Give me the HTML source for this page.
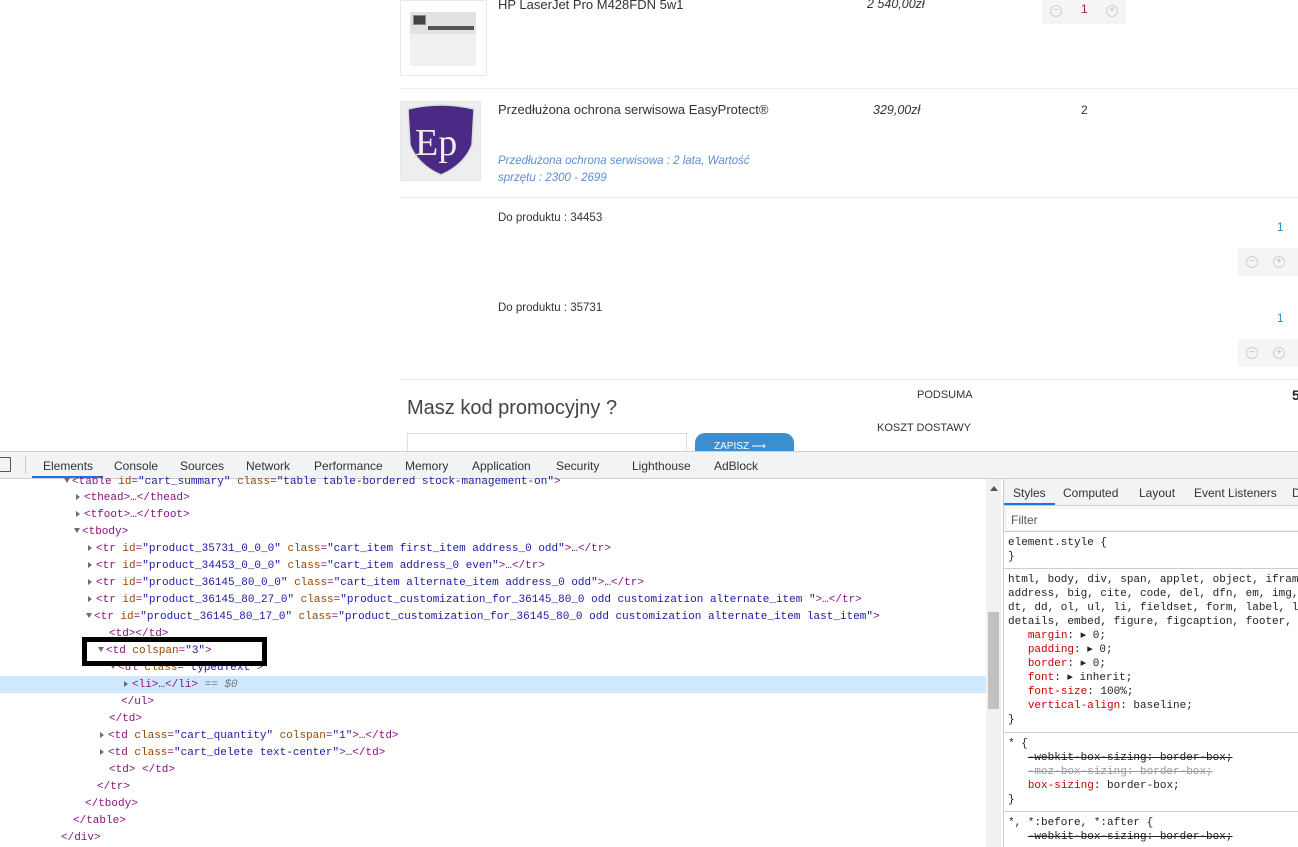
<!DOCTYPE html>
<html><head><meta charset="utf-8"><style>
*{box-sizing:border-box;margin:0;padding:0}
body{width:1298px;height:847px;overflow:hidden;background:#fff;position:relative;font-family:"Liberation Sans",sans-serif}
.a{position:absolute;white-space:nowrap}
.hr{position:absolute;height:1px;background:#ececec}
.qb{position:absolute;background:#f5f5f5}
.ci{position:absolute;width:12px;height:12px;border:1px solid #cfcfcf;border-radius:50%;color:#bbb;font-size:10px;line-height:10px;text-align:center}
.ln{position:absolute;height:17px;line-height:17px;white-space:nowrap;font-family:"Liberation Mono",monospace;font-size:11px;color:#881280}
.t{color:#881280}.n{color:#994500}.v{color:#1a1aa6}
.tri{display:inline-block;width:0;height:0;border-left:4px solid #6e6e6e;border-top:3.5px solid transparent;border-bottom:3.5px solid transparent;margin-right:4px;vertical-align:0}
.trd{display:inline-block;width:0;height:0;border-top:5px solid #6e6e6e;border-left:3.5px solid transparent;border-right:3.5px solid transparent;margin-right:2px;vertical-align:1px}
.tab{position:absolute;top:459px;font-size:12px;color:#333}
.st{position:absolute;font-family:"Liberation Mono",monospace;font-size:11px;color:#222;white-space:nowrap;line-height:14px}
.p{color:#c80000}
</style></head><body>

<div class="a" style="left:400px;top:0;width:87px;height:76px;border:1px solid #e8e8e8;background:#fff"></div>
<div class="a" style="left:408px;top:4px;width:72px;height:66px">
 <div style="position:absolute;left:2px;top:8px;width:66px;height:54px;background:#f1f1f1;border-radius:2px"></div>
 <div style="position:absolute;left:2px;top:8px;width:66px;height:22px;background:#e2e2e2"></div>
 <div style="position:absolute;left:5px;top:11px;width:13px;height:10px;background:#444;border:1px solid #888"></div>
 <div style="position:absolute;left:20px;top:22px;width:46px;height:4px;background:#555"></div>
</div>
<div class="a" style="left:498px;top:-3px;font-size:13px;color:#333">HP LaserJet Pro M428FDN 5w1</div>
<div class="a" style="left:867px;top:-3px;font-size:12.5px;color:#333;font-style:italic">2 540,00zł</div>
<div class="qb" style="left:1042px;top:0;width:84px;height:24px"></div>
<div class="ci" style="left:1050px;top:5px">−</div>
<div class="a" style="left:1081px;top:2px;font-size:12px;color:#8a3030">1</div>
<div class="ci" style="left:1106px;top:5px">+</div>

<div class="hr" style="left:400px;top:88px;width:898px"></div>

<div class="a" style="left:400px;top:101px;width:81px;height:80px;border:1px solid #e8e8e8;background:#eee"></div>
<svg class="a" style="left:402px;top:103px" width="78" height="76" viewBox="0 0 78 76"><path d="M6 6 Q39 -2 72 6 L70 42 Q62 62 39 72 Q16 62 8 42 Z" fill="#4b2a86" stroke="#ddd" stroke-width="1.5"/><text x="13" y="52" font-family="Liberation Serif,serif" font-size="38" fill="#eee">Ep</text></svg>
<div class="a" style="left:498px;top:102px;font-size:13px;color:#333">Przedłużona ochrona serwisowa EasyProtect®</div>
<div class="a" style="left:873px;top:103px;font-size:12.5px;color:#333;font-style:italic">329,00zł</div>
<div class="a" style="left:1081px;top:103px;font-size:12px;color:#333">2</div>
<div class="a" style="left:498px;top:153px;font-size:11.5px;color:#5b8fd0;font-style:italic;line-height:17px">Przedłużona ochrona serwisowa : 2 lata, Wartość<br>sprzętu : 2300 - 2699</div>

<div class="hr" style="left:400px;top:197px;width:898px"></div>

<div class="a" style="left:498px;top:212px;font-size:11.5px;color:#333">Do produktu : 34453</div>
<div class="a" style="left:1277px;top:222px;font-size:11.5px;color:#1a8ac8">1</div>
<div class="qb" style="left:1238px;top:248px;width:60px;height:28px"></div>
<div class="ci" style="left:1246px;top:256px">−</div>
<div class="ci" style="left:1273px;top:256px">+</div>

<div class="a" style="left:498px;top:302px;font-size:11.5px;color:#333">Do produktu : 35731</div>
<div class="a" style="left:1277px;top:313px;font-size:11.5px;color:#1a8ac8">1</div>
<div class="qb" style="left:1238px;top:339px;width:60px;height:28px"></div>
<div class="ci" style="left:1246px;top:347px">−</div>
<div class="ci" style="left:1273px;top:347px">+</div>

<div class="hr" style="left:400px;top:379px;width:898px;background:#e4e4e4"></div>
<div class="a" style="left:407px;top:397px;font-size:20px;color:#444;font-weight:300">Masz kod promocyjny ?</div>
<div class="a" style="left:917px;top:389px;font-size:11px;color:#333">PODSUMA</div>
<div class="a" style="left:877px;top:422px;font-size:11px;color:#333">KOSZT DOSTAWY</div>
<div class="a" style="left:1292px;top:387px;font-size:14px;color:#222;font-weight:bold">5</div>
<div class="a" style="left:407px;top:433px;width:280px;height:20px;border:1px solid #ddd;border-bottom:none"></div>
<div class="a" style="left:695px;top:433px;width:99px;height:20px;background:#3b8fd0;border-radius:10px 10px 0 0;color:#fff;font-size:10px;padding:8px 0 0 19px">ZAPISZ ⟶</div>

<div class="a" style="left:0;top:451px;width:1298px;height:28px;background:#f1f3f4;border-top:1px solid #d0d0d0;border-bottom:1px solid #d0d0d0"></div>
<div class="a" style="left:-6px;top:457px;width:17px;height:15px;border:1.5px solid #555;border-radius:1px"></div>
<div class="a" style="left:25px;top:456px;width:1px;height:18px;background:#ccc"></div>
<div class="tab" style="left:43px">Elements</div>
<div class="a" style="left:32px;top:476px;width:71px;height:2px;background:#1a73e8"></div>
<div class="tab" style="left:114px">Console</div>
<div class="tab" style="left:180px">Sources</div>
<div class="tab" style="left:246px">Network</div>
<div class="tab" style="left:314px">Performance</div>
<div class="tab" style="left:405px">Memory</div>
<div class="tab" style="left:472px">Application</div>
<div class="tab" style="left:556px">Security</div>
<div class="tab" style="left:632px">Lighthouse</div>
<div class="tab" style="left:714px">AdBlock</div>

<div class="a" style="left:0;top:676px;width:986px;height:17px;background:#cfe8fc"></div>
<div class="ln" style="left:64px;top:474px"><span class="trd"></span>&lt;table <span class="n">id</span>=<span class="v">"cart_summary"</span> <span class="n">class</span>=<span class="v">"table table-bordered stock-management-on"</span>&gt;</div>
<div class="ln" style="left:76px;top:490px"><span class="tri"></span>&lt;thead&gt;<span style="color:#333">…</span>&lt;/thead&gt;</div>
<div class="ln" style="left:76px;top:507px"><span class="tri"></span>&lt;tfoot&gt;<span style="color:#333">…</span>&lt;/tfoot&gt;</div>
<div class="ln" style="left:74px;top:524px"><span class="trd"></span>&lt;tbody&gt;</div>
<div class="ln" style="left:88px;top:541px"><span class="tri"></span>&lt;tr <span class="n">id</span>=<span class="v">"product_35731_0_0_0"</span> <span class="n">class</span>=<span class="v">"cart_item first_item address_0 odd"</span>&gt;<span style="color:#333">…</span>&lt;/tr&gt;</div>
<div class="ln" style="left:88px;top:558px"><span class="tri"></span>&lt;tr <span class="n">id</span>=<span class="v">"product_34453_0_0_0"</span> <span class="n">class</span>=<span class="v">"cart_item address_0 even"</span>&gt;<span style="color:#333">…</span>&lt;/tr&gt;</div>
<div class="ln" style="left:88px;top:575px"><span class="tri"></span>&lt;tr <span class="n">id</span>=<span class="v">"product_36145_80_0_0"</span> <span class="n">class</span>=<span class="v">"cart_item alternate_item address_0 odd"</span>&gt;<span style="color:#333">…</span>&lt;/tr&gt;</div>
<div class="ln" style="left:88px;top:592px"><span class="tri"></span>&lt;tr <span class="n">id</span>=<span class="v">"product_36145_80_27_0"</span> <span class="n">class</span>=<span class="v">"product_customization_for_36145_80_0 odd customization alternate_item "</span>&gt;<span style="color:#333">…</span>&lt;/tr&gt;</div>
<div class="ln" style="left:86px;top:609px"><span class="trd"></span>&lt;tr <span class="n">id</span>=<span class="v">"product_36145_80_17_0"</span> <span class="n">class</span>=<span class="v">"product_customization_for_36145_80_0 odd customization alternate_item last_item"</span>&gt;</div>
<div class="ln" style="left:109px;top:626px">&lt;td&gt;&lt;/td&gt;</div>
<div class="ln" style="left:98px;top:643px"><span class="trd"></span>&lt;td <span class="n">colspan</span>=<span class="v">"3"</span>&gt;</div>
<div class="ln" style="left:110px;top:660px"><span class="trd"></span>&lt;ul <span class="n">class</span>=<span class="v">"typedText"</span>&gt;</div>
<div class="ln" style="left:124px;top:677px"><span class="tri"></span>&lt;li&gt;<span style="color:#333">…</span>&lt;/li&gt; <span style="color:#777">== </span><span style="color:#777;font-style:italic">$0</span></div>
<div class="ln" style="left:121px;top:694px">&lt;/ul&gt;</div>
<div class="ln" style="left:109px;top:711px">&lt;/td&gt;</div>
<div class="ln" style="left:100px;top:728px"><span class="tri"></span>&lt;td <span class="n">class</span>=<span class="v">"cart_quantity"</span> <span class="n">colspan</span>=<span class="v">"1"</span>&gt;<span style="color:#333">…</span>&lt;/td&gt;</div>
<div class="ln" style="left:100px;top:745px"><span class="tri"></span>&lt;td <span class="n">class</span>=<span class="v">"cart_delete text-center"</span>&gt;<span style="color:#333">…</span>&lt;/td&gt;</div>
<div class="ln" style="left:109px;top:762px">&lt;td&gt; &lt;/td&gt;</div>
<div class="ln" style="left:97px;top:779px">&lt;/tr&gt;</div>
<div class="ln" style="left:85px;top:796px">&lt;/tbody&gt;</div>
<div class="ln" style="left:73px;top:813px">&lt;/table&gt;</div>
<div class="ln" style="left:61px;top:830px">&lt;/div&gt;</div>
<div class="a" style="left:82px;top:637px;width:185px;height:29px;border:5px solid #000"></div>

<div class="a" style="left:986px;top:479px;width:15px;height:368px;background:#f1f1f1"></div>
<div class="a" style="left:990px;top:486px;width:0;height:0;border-bottom:5px solid #555;border-left:4px solid transparent;border-right:4px solid transparent"></div>
<div class="a" style="left:988px;top:612px;width:11px;height:97px;background:#c1c1c1"></div>
<div class="a" style="left:1003px;top:479px;width:1px;height:368px;background:#ccc"></div>

<div class="a" style="left:1004px;top:479px;width:294px;height:27px;background:#f1f3f4;border-bottom:1px solid #ccc"></div>
<div class="tab" style="left:1013px;top:486px">Styles</div>
<div class="a" style="left:1004px;top:503px;width:51px;height:2px;background:#1a73e8"></div>
<div class="tab" style="left:1063px;top:486px">Computed</div>
<div class="tab" style="left:1139px;top:486px">Layout</div>
<div class="tab" style="left:1194px;top:486px">Event Listeners</div>
<div class="tab" style="left:1292px;top:486px">D</div>
<div class="a" style="left:1004px;top:507px;width:294px;height:25px;background:#f1f3f4;border-bottom:1px solid #ccc"></div>
<div class="a" style="left:1007px;top:509px;width:291px;height:21px;background:#fff"></div>
<div class="a" style="left:1011px;top:513px;font-size:12px;color:#555">Filter</div>
<div class="st" style="left:1008px;top:536px">element.style {<br>}</div>
<div class="hr" style="left:1004px;top:568px;width:294px;background:#ccc"></div>
<div class="st" style="left:1008px;top:573px">html, body, div, span, applet, object, iframe<br>address, big, cite, code, del, dfn, em, img, <br>dt, dd, ol, ul, li, fieldset, form, label, l<br>details, embed, figure, figcaption, footer, <br>&nbsp;&nbsp; <span class="p">margin</span>: ▸ 0;<br>&nbsp;&nbsp; <span class="p">padding</span>: ▸ 0;<br>&nbsp;&nbsp; <span class="p">border</span>: ▸ 0;<br>&nbsp;&nbsp; <span class="p">font</span>: ▸ inherit;<br>&nbsp;&nbsp; <span class="p">font-size</span>: 100%;<br>&nbsp;&nbsp; <span class="p">vertical-align</span>: baseline;<br>}</div>
<div class="hr" style="left:1004px;top:732px;width:294px;background:#ccc"></div>
<div class="st" style="left:1008px;top:737px">* {<br>&nbsp;&nbsp; <s>-webkit-box-sizing: border-box;</s><br>&nbsp;&nbsp; <s style="color:#999">-moz-box-sizing: border-box;</s><br>&nbsp;&nbsp; <span class="p">box-sizing</span>: border-box;<br>}</div>
<div class="hr" style="left:1004px;top:811px;width:294px;background:#ccc"></div>
<div class="st" style="left:1008px;top:816px">*, *:before, *:after {<br>&nbsp;&nbsp; <s>-webkit-box-sizing: border-box;</s></div>
</body></html>
